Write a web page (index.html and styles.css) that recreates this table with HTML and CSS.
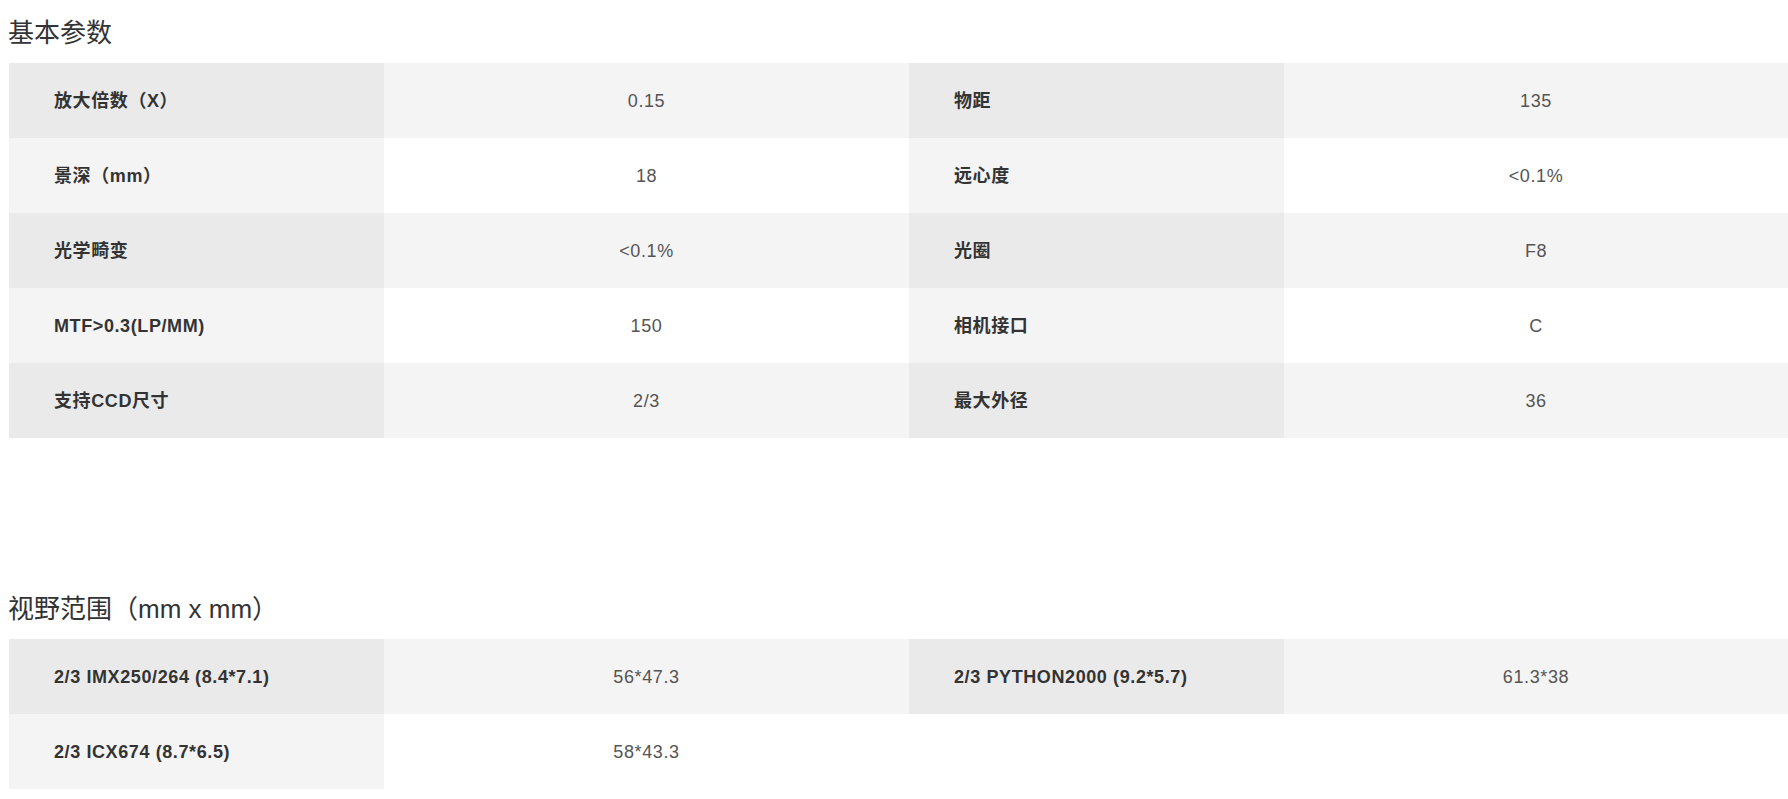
FILE: index.html
```html
<!DOCTYPE html>
<html lang="zh-CN">
<head>
    <meta charset="UTF-8">
    <meta name="viewport" content="width=device-width, initial-scale=1.0">
    <title>基本参数</title>
    <link rel="stylesheet" href="styles.css">
</head>
<body>
    <div class="section">
        <h3 class="titulo">基本参数</h3>
        <table class="tabla">
            <colgroup>
                <col class="col-label">
                <col class="col-value">
                <col class="col-label">
                <col>
            </colgroup>
            <tr>
                <td class="label">放大倍数（X）</td>
                <td class="value">0.15</td>
                <td class="label">物距</td>
                <td class="value">135</td>
            </tr>
            <tr>
                <td class="label">景深（mm）</td>
                <td class="value">18</td>
                <td class="label">远心度</td>
                <td class="value">&lt;0.1%</td>
            </tr>
            <tr>
                <td class="label">光学畸变</td>
                <td class="value">&lt;0.1%</td>
                <td class="label">光圈</td>
                <td class="value">F8</td>
            </tr>
            <tr>
                <td class="label">MTF&gt;0.3(LP/MM)</td>
                <td class="value">150</td>
                <td class="label">相机接口</td>
                <td class="value">C</td>
            </tr>
            <tr>
                <td class="label">支持CCD尺寸</td>
                <td class="value">2/3</td>
                <td class="label">最大外径</td>
                <td class="value">36</td>
            </tr>
        </table>
    </div>

    <div class="section section-fov">
        <h3 class="titulo">视野范围（mm x mm）</h3>
        <table class="tabla">
            <colgroup>
                <col class="col-label">
                <col class="col-value">
                <col class="col-label">
                <col>
            </colgroup>
            <tr>
                <td class="label">2/3 IMX250/264 (8.4*7.1)</td>
                <td class="value">56*47.3</td>
                <td class="label">2/3 PYTHON2000 (9.2*5.7)</td>
                <td class="value">61.3*38</td>
            </tr>
            <tr>
                <td class="label">2/3 ICX674 (8.7*6.5)</td>
                <td class="value">58*43.3</td>
            </tr>
        </table>
    </div>
</body>
</html>
```

FILE: styles.css
```css
body {
    font-family: "Liberation Sans", Arial, "Noto Sans CJK SC", sans-serif;
    margin: 0;
    background-color: #ffffff;
    color: #333333;
}
.section {
    padding-left: 9px;
}
.section-fov {
    margin-top: 152px;
}
.titulo {
    font-size: 26px;
    font-weight: normal;
    line-height: 39px;
    margin: 14px 0 10px -1px;
    color: #333;
}
.tabla {
    width: 100%;
    border-collapse: collapse;
    table-layout: fixed;
}
.col-label {
    width: 375px;
}
.col-value {
    width: 525px;
}
.tabla tr:nth-child(odd) {
    background: #f4f4f4;
}
.tabla td {
    height: 75px;
    padding: 0;
    font-size: 18px;
    line-height: 20px;
    letter-spacing: 0.6px;
    vertical-align: middle;
}
.label {
    padding-left: 45px !important;
    font-weight: bold;
    color: #333;
    background: #f4f4f4;
}
.tabla tr:nth-child(odd) .label {
    background: #eaeaea;
}
.value {
    text-align: center;
    color: #555;
}
```
